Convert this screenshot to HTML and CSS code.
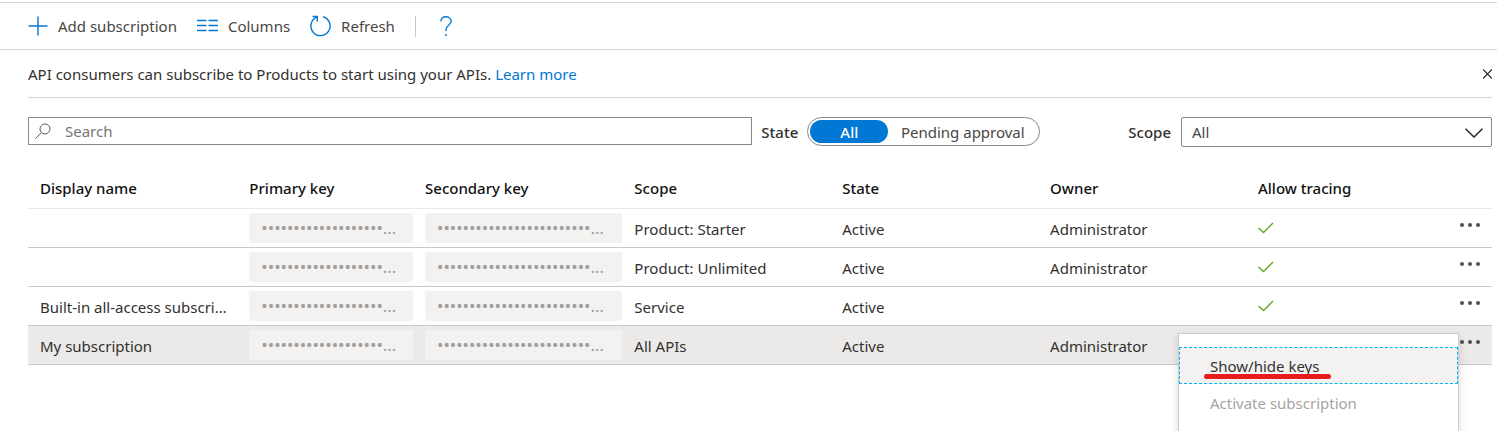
FILE: index.html
```html
<!DOCTYPE html>
<html lang="en">
<head>
<meta charset="utf-8">
<meta name="viewport" content="width=device-width, initial-scale=1">
<title>Subscriptions</title>
<link rel="stylesheet" href="styles.css">
</head>
<body>
<svg class="sprite" aria-hidden="true">
  <symbol id="check" viewBox="0 0 16 12"><path d="M.5 6 L5.500 10.500 L15 1" fill="none" stroke="#5ea922" stroke-width="1.400"/></symbol>
  <symbol id="dots" viewBox="0 0 20 4"><circle cx="2" cy="2" r="2"/><circle cx="10" cy="2" r="2"/><circle cx="18" cy="2" r="2"/></symbol>
</svg>
<header class="toolbar">
  <button class="command" type="button">
    <svg width="20" height="20" viewBox="0 0 20 20"><path d="M10 0.500v19M0.500 10h19"/></svg>
    Add subscription
  </button>
  <button class="command" type="button">
    <svg width="21" height="20" viewBox="0 0 21 20"><path d="M0 4.500h9.500M11.500 4.500H21M0 9.500h9.500M11.500 9.500H21M0 14.500h9.500M11.500 14.500H21"/></svg>
    Columns
  </button>
  <button class="command" type="button">
    <svg width="21" height="22" viewBox="0 0 21 22"><path d="M13 1.800A9.600 9.600 0 1 1 6.800 2.200M2.500 1.500H7.300V6.500"/></svg>
    Refresh
  </button>
  <span class="divider"></span>
  <button class="command" type="button" aria-label="Help">
    <svg width="12" height="20" viewBox="0 0 12 20"><path d="M0.800 5.500C0.800 2.500 3 .8 5.800 .8S11.200 2.600 11.200 5.300C11.200 9 6 9.500 6 13.500V15M6 18V20"/></svg>
  </button>
</header>
<main class="content">
  <section class="notice">
    <p>API consumers can subscribe to Products to start using your APIs. <a href="#">Learn more</a></p>
    <button class="close" type="button" aria-label="Close">
      <svg width="9" height="10" viewBox="0 0 9 10"><path d="M0 .5L9 9.500M9 .5L0 9.500"/></svg>
    </button>
  </section>
  <form class="filters">
    <div class="search">
      <svg width="16" height="16" viewBox="0 0 16 16"><circle cx="10" cy="6" r="5"/><path d="M6.500 9.500L.5 15.500"/></svg>
      <input type="text" placeholder="Search" aria-label="Search">
    </div>
    <fieldset class="state">
      <legend class="hidden">State</legend>
      <span class="label" aria-hidden="true">State</span>
      <div class="pill">
        <label class="option option-all"><input class="hidden" type="radio" name="state" checked>All</label>
        <label class="option option-pending"><input class="hidden" type="radio" name="state">Pending approval</label>
      </div>
    </fieldset>
    <div class="scope">
      <label class="label" for="scope">Scope</label>
      <div class="select">
        <select id="scope"><option>All</option></select>
        <svg width="18" height="10" viewBox="0 0 18 10"><path d="M.5 .8L9 9L17.500 .8"/></svg>
      </div>
    </div>
  </form>
  <table class="grid">
    <colgroup><col class="c-name"><col class="c-primary"><col class="c-secondary"><col class="c-text"><col class="c-text"><col class="c-text"><col class="c-text"><col class="c-more"></colgroup>
    <thead>
      <tr><th>Display name</th><th>Primary key</th><th>Secondary key</th><th>Scope</th><th>State</th><th>Owner</th><th>Allow tracing</th><th></th></tr>
    </thead>
    <tbody>
      <tr>
        <td></td><td class="key"><div>•••••••••••••••••••…</div></td><td class="key"><div>••••••••••••••••••••••••…</div></td>
        <td>Product: Starter</td><td>Active</td><td>Administrator</td>
        <td class="mark"><svg width="16" height="12"><use href="#check"/></svg></td>
        <td class="more"><button type="button" aria-label="More"><svg width="20" height="4"><use href="#dots"/></svg></button></td>
      </tr>
      <tr>
        <td></td><td class="key"><div>•••••••••••••••••••…</div></td><td class="key"><div>••••••••••••••••••••••••…</div></td>
        <td>Product: Unlimited</td><td>Active</td><td>Administrator</td>
        <td class="mark"><svg width="16" height="12"><use href="#check"/></svg></td>
        <td class="more"><button type="button" aria-label="More"><svg width="20" height="4"><use href="#dots"/></svg></button></td>
      </tr>
      <tr>
        <td>Built-in all-access subscri…</td><td class="key"><div>•••••••••••••••••••…</div></td><td class="key"><div>••••••••••••••••••••••••…</div></td>
        <td>Service</td><td>Active</td><td></td>
        <td class="mark"><svg width="16" height="12"><use href="#check"/></svg></td>
        <td class="more"><button type="button" aria-label="More"><svg width="20" height="4"><use href="#dots"/></svg></button></td>
      </tr>
      <tr class="selected">
        <td>My subscription</td><td class="key"><div>•••••••••••••••••••…</div></td><td class="key"><div>••••••••••••••••••••••••…</div></td>
        <td>All APIs</td><td>Active</td><td>Administrator</td>
        <td></td>
        <td class="more">
          <button type="button" aria-label="More"><svg width="20" height="4"><use href="#dots"/></svg></button>
          <div class="menu">
            <button class="item focused" type="button"><span class="marked">Show/hide keys</span></button>
            <button class="item" type="button" disabled>Activate subscription</button>
          </div>
        </td>
      </tr>
    </tbody>
  </table>
</main>
</body>
</html>
```
FILE: styles.css
```css
* { box-sizing: border-box; }
html { height: 100%; overflow: hidden; }
body {
  margin: 0;
  padding-top: 2px;
  height: 100%;
  overflow: hidden;
  background: #fff;
  color: #323130;
  font: 15px/20px "Noto Sans", "Open Sans", sans-serif;
}
button, input, select { font: inherit; color: inherit; }
button { background: none; border: 0; padding: 0; }
svg { display: block; flex: none; }
.sprite { display: none; }
.hidden {
  position: absolute;
  width: 1px;
  height: 1px;
  margin: 0;
  opacity: 0;
  overflow: hidden;
}

.toolbar {
  display: flex;
  align-items: center;
  gap: 20px;
  height: 48px;
  padding-left: 28px;
  border-top: 1px solid #d6d6d6;
  border-bottom: 1px solid #d6d6d6;
}
.command { display: flex; align-items: center; gap: 10px; color: #484644; }
.command svg { fill: none; stroke: #0078d4; stroke-width: 1.4; }
.divider { width: 1px; height: 21px; margin-right: 4px; background: #c8c8c8; }

.content { padding: 0 5px 0 28px; }
.notice {
  display: flex;
  align-items: center;
  justify-content: space-between;
  height: 48px;
  border-bottom: 1px solid #d6d6d6;
}
.notice p { margin: 0; }
.notice a { color: #0078d4; text-decoration: none; }
.close svg { stroke: #222; stroke-width: 1.2; }

.filters { display: flex; align-items: flex-start; padding-top: 19px; }
.search {
  display: flex;
  align-items: center;
  flex: 1;
  gap: 14px;
  height: 28px;
  padding-left: 6px;
  border: 1px solid #8a8886;
}
.search svg { fill: none; stroke: #605e5c; stroke-width: 1; }
.search input { flex: 1; min-width: 0; padding: 0; border: 0; outline: 0; background: none; }
.search input::placeholder { color: #767472; opacity: 1; }
.label { font-weight: 500; color: #323130; }
.state {
  display: flex;
  align-items: center;
  gap: 9px;
  margin: 0;
  padding: 0 0 0 9px;
  border: 0;
}
.pill {
  display: flex;
  width: 233px;
  height: 29px;
  padding: 2px;
  border: 1px solid #8a8886;
  border-radius: 15px;
}
.option { display: flex; align-items: center; justify-content: center; height: 23px; border-radius: 12px; }
.option-all { width: 78px; background: #0078d4; color: #fff; font-weight: 500; }
.option-pending { flex: 1; color: #484644; }
.scope { display: flex; align-items: center; gap: 10px; margin-left: 88px; }
.select { position: relative; width: 311px; }
.select select {
  display: block;
  width: 100%;
  height: 30px;
  padding: 0 10px;
  appearance: none;
  background: #fff;
  border: 1px solid #8a8886;
  border-radius: 2px;
  color: #484644;
}
.select svg {
  position: absolute;
  right: 9px;
  top: 11px;
  fill: none;
  stroke: #222;
  stroke-width: 1.4;
  pointer-events: none;
}

.grid { width: 100%; margin-top: 20px; border-collapse: separate; border-spacing: 0; table-layout: fixed; }
.c-name { width: 14.3%; }
.c-primary { width: 12%; }
.c-secondary { width: 14.3%; }
.c-text { width: 14.2%; }
.grid th {
  height: 42px;
  padding: 0 0 0 12px;
  border-bottom: 1px solid #eaeaea;
  color: #111;
  font-weight: 500;
  text-align: left;
}
.grid td {
  height: 39px;
  padding: 2px 0 0 12px;
  border-bottom: 1px solid #c8c8c8;
  white-space: nowrap;
}
.grid .key { padding-top: 0; }
.key div {
  height: 30px;
  padding: 0 12px;
  background: #f3f2f1;
  border-radius: 2px;
  color: #a19f9d;
  font-size: 17px;
  line-height: 30px;
  overflow: hidden;
}
.grid .mark { padding-top: 0; }
.grid .more { position: relative; padding: 0 12px 6px 0; }
.more > button { display: block; margin-left: auto; }
.more > button svg { fill: #505050; }
.selected td { background: #ebeae8; }

.menu {
  position: absolute;
  top: 7px;
  right: 33px;
  width: 281px;
  padding: 13px 0;
  background: #fff;
  border: 1px solid #ccc;
  box-shadow: 0 3px 8px rgba(0, 0, 0, .15);
}
.item { display: block; width: 100%; height: 37px; padding: 0 30px; border: 1px solid transparent; text-align: left; }
.item:disabled { color: #a6a4a2; }
.item.focused { background: #f3f2f1; border: 1px dashed #00b7f0; }
.marked { position: relative; }
.marked::after {
  content: "";
  position: absolute;
  left: -6px;
  right: -12px;
  bottom: -3px;
  height: 5px;
  border-radius: 3px;
  background: #e81b1f;
}
```
